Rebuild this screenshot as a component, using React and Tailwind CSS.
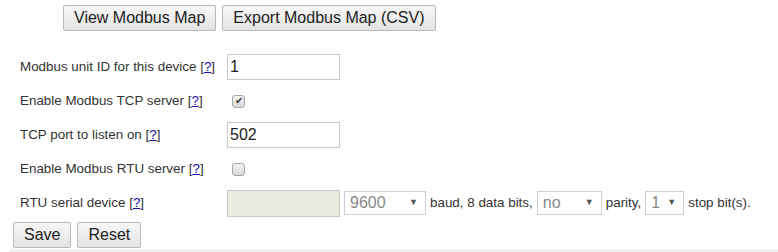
import React from 'react';

const Help = () => (
  <span>
    {' '}[<a href="#" className="text-[#1a0dab] underline">?</a>]
  </span>
);

const Btn = ({ children, className = '' }) => (
  <button
    className={`h-[26px] px-[10px] rounded-[2px] border border-[#b8b8b8] bg-gradient-to-b from-[#f7f7f7] to-[#e3e3e3] text-[16px] text-[#222] leading-none ${className}`}
  >
    {children}
  </button>
);

const Check = ({ checked }) => (
  <span className="ml-[5px] inline-flex w-[13px] h-[13px] items-center justify-center rounded-[3px] border border-[#a6a6a6] bg-gradient-to-b from-[#f4f4f4] to-[#d8d8d8] text-[10px] leading-none text-[#333]">
    {checked ? '✔' : ''}
  </span>
);

const Select = ({ value, className = '' }) => (
  <span
    className={`inline-flex h-[24px] items-center justify-between border border-[#cfcfcf] bg-white pl-[5px] pr-[7px] text-[16px] text-[#888] ${className}`}
  >
    <span>{value}</span>
    <span className="text-[9px] text-[#555]">▼</span>
  </span>
);

const Row = ({ label, children }) => (
  <div className="flex h-[34px] items-center">
    <div className="w-[207px] text-[13.4px] text-[#333]">
      {label}
      <Help />
    </div>
    <div className="flex items-center">{children}</div>
  </div>
);

export default function App() {
  return (
    <div className="bg-white w-[778px] h-[252px] overflow-hidden font-['Liberation_Sans',Arial,sans-serif]">
      <div className="flex gap-[6px] pl-[63px] pt-[5px]">
        <Btn>View Modbus Map</Btn>
        <Btn>Export Modbus Map (CSV)</Btn>
      </div>

      <div className="pl-[20px] pt-[19px]">
        <Row label="Modbus unit ID for this device">
          <input
            defaultValue="1"
            className="w-[113px] h-[26px] border border-[#c8c8c8] px-[2px] text-[16px] text-[#222] outline-none"
          />
        </Row>
        <Row label="Enable Modbus TCP server">
          <Check checked />
        </Row>
        <Row label="TCP port to listen on">
          <input
            defaultValue="502"
            className="w-[113px] h-[26px] border border-[#c8c8c8] px-[2px] text-[16px] text-[#222] outline-none"
          />
        </Row>
        <Row label="Enable Modbus RTU server">
          <Check />
        </Row>
        <Row label="RTU serial device">
          <input
            disabled
            className="w-[113px] h-[27px] border border-[#c8c8c8] bg-[#ebebe4] outline-none"
          />
          <Select value="9600" className="ml-[4px] w-[82px]" />
          <span className="mx-[4px] text-[13.4px] text-[#333]">baud, 8 data bits,</span>
          <Select value="no" className="w-[65px]" />
          <span className="mx-[4px] text-[13.4px] text-[#333]">parity,</span>
          <Select value="1" className="w-[39px]" />
          <span className="ml-[4px] text-[13.4px] text-[#333]">stop bit(s).</span>
        </Row>
      </div>

      <div className="flex gap-[6px] pl-[13px] pt-[2px]">
        <Btn>Save</Btn>
        <Btn>Reset</Btn>
      </div>

      <div className="ml-[10px] mt-[1px] h-[10px] overflow-hidden bg-[#f0f0f0] pl-[330px] text-[12px] leading-[20px] text-[#999] whitespace-nowrap">
        Removing all hidden settings from a non-running Tesla for now, seeing the hint for current state
      </div>
    </div>
  );
}
